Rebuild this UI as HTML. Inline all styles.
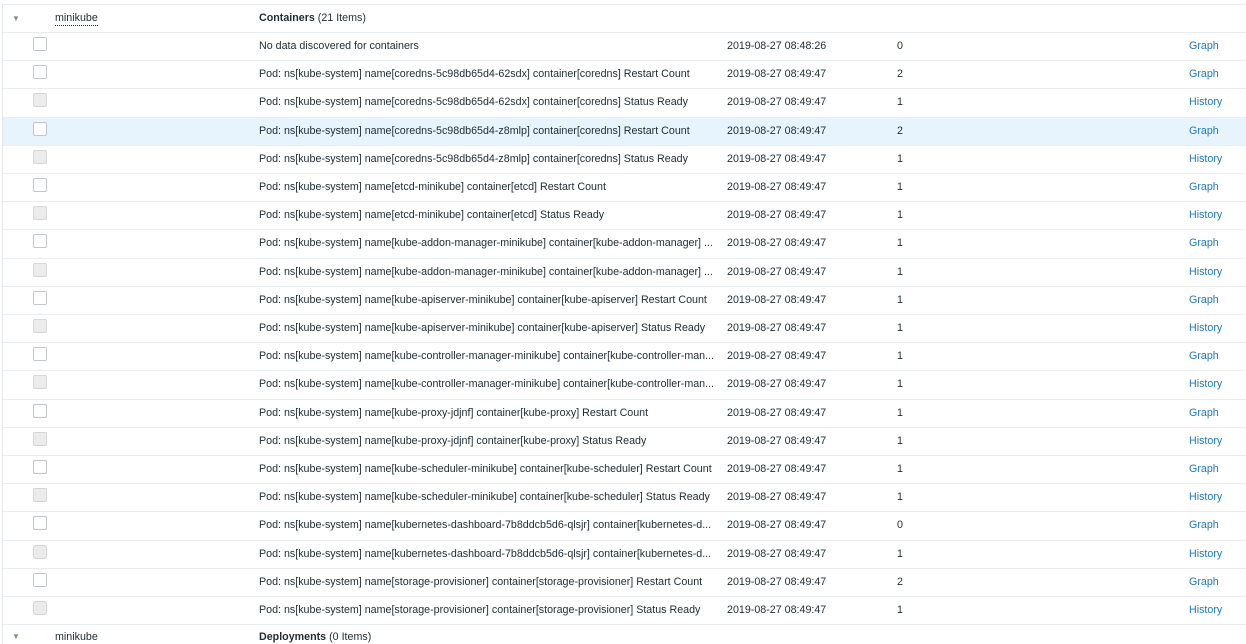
<!DOCTYPE html>
<html><head><meta charset="utf-8"><style>
body{margin:0;width:1246px;height:637px;overflow:hidden;background:#fff;font-family:"Liberation Sans",Arial,sans-serif;font-size:10.7px;color:#1f2c33;position:relative}
.lb{position:absolute;left:2px;top:4px;width:1px;height:640px;background:#e6e9ec}
.r{position:absolute;left:3px;width:1243px;border-top:1px solid #ebeef0;box-sizing:border-box}
.r span{position:absolute;top:0;white-space:nowrap}
.cb{position:absolute;left:30px;width:12px;height:12px;border:1px solid #bfc5c9;border-radius:2px;background:#fff}
.cb.d{background:#ebebeb;border-color:#d6d6d6}
.n{left:256px}.t{left:724px}.v{left:894px}.l{left:1186px;color:#1f7ab8}
.hl{background:#e8f4fd}
</style></head><body>
<div class="lb"></div>
<div class="r" style="top:4px;height:28px">
<span style="left:9px;top:9px;font-size:8px;color:#7d8b94">▼</span>
<span style="left:52px;top:7px;border-bottom:1px dotted #1f2c33;line-height:13px">minikube</span>
<span style="left:256px;top:7px;line-height:13px"><b>Containers</b> (21 Items)</span>
</div>
<div id="rows"></div>
<div class="r" style="top:624px;height:20px">
<span style="left:9px;top:7px;font-size:8px;color:#7d8b94">▼</span>
<span style="left:52px;top:6px">minikube</span>
<span style="left:256px;top:6px"><b>Deployments</b> (0 Items)</span>
</div>
<script>
var d=[
["No data discovered for containers","2019-08-27 08:48:26","0","Graph"],
["Pod: ns[kube-system] name[coredns-5c98db65d4-62sdx] container[coredns] Restart Count","","2","Graph"],
["Pod: ns[kube-system] name[coredns-5c98db65d4-62sdx] container[coredns] Status Ready","","1","History"],
["Pod: ns[kube-system] name[coredns-5c98db65d4-z8mlp] container[coredns] Restart Count","","2","Graph"],
["Pod: ns[kube-system] name[coredns-5c98db65d4-z8mlp] container[coredns] Status Ready","","1","History"],
["Pod: ns[kube-system] name[etcd-minikube] container[etcd] Restart Count","","1","Graph"],
["Pod: ns[kube-system] name[etcd-minikube] container[etcd] Status Ready","","1","History"],
["Pod: ns[kube-system] name[kube-addon-manager-minikube] container[kube-addon-manager] ...","","1","Graph"],
["Pod: ns[kube-system] name[kube-addon-manager-minikube] container[kube-addon-manager] ...","","1","History"],
["Pod: ns[kube-system] name[kube-apiserver-minikube] container[kube-apiserver] Restart Count","","1","Graph"],
["Pod: ns[kube-system] name[kube-apiserver-minikube] container[kube-apiserver] Status Ready","","1","History"],
["Pod: ns[kube-system] name[kube-controller-manager-minikube] container[kube-controller-man...","","1","Graph"],
["Pod: ns[kube-system] name[kube-controller-manager-minikube] container[kube-controller-man...","","1","History"],
["Pod: ns[kube-system] name[kube-proxy-jdjnf] container[kube-proxy] Restart Count","","1","Graph"],
["Pod: ns[kube-system] name[kube-proxy-jdjnf] container[kube-proxy] Status Ready","","1","History"],
["Pod: ns[kube-system] name[kube-scheduler-minikube] container[kube-scheduler] Restart Count","","1","Graph"],
["Pod: ns[kube-system] name[kube-scheduler-minikube] container[kube-scheduler] Status Ready","","1","History"],
["Pod: ns[kube-system] name[kubernetes-dashboard-7b8ddcb5d6-qlsjr] container[kubernetes-d...","","0","Graph"],
["Pod: ns[kube-system] name[kubernetes-dashboard-7b8ddcb5d6-qlsjr] container[kubernetes-d...","","1","History"],
["Pod: ns[kube-system] name[storage-provisioner] container[storage-provisioner] Restart Count","","2","Graph"],
["Pod: ns[kube-system] name[storage-provisioner] container[storage-provisioner] Status Ready","","1","History"]];
var h="";
d.forEach(function(r,i){var top=32+i*28.2;var dis=r[3]=="History"&&i>0;
h+='<div class="r'+(i==3?' hl':'')+'" style="top:'+top+'px;height:29px"><div class="cb'+(dis?' d':'')+'" style="top:4px"></div>'+
'<span class="n" style="top:7px">'+r[0]+'</span><span class="t" style="top:7px">'+(r[1]||"2019-08-27 08:49:47")+'</span><span class="v" style="top:7px">'+r[2]+'</span><span class="l" style="top:7px">'+r[3]+'</span></div>';});
document.getElementById("rows").innerHTML=h;
</script>
</body></html>
